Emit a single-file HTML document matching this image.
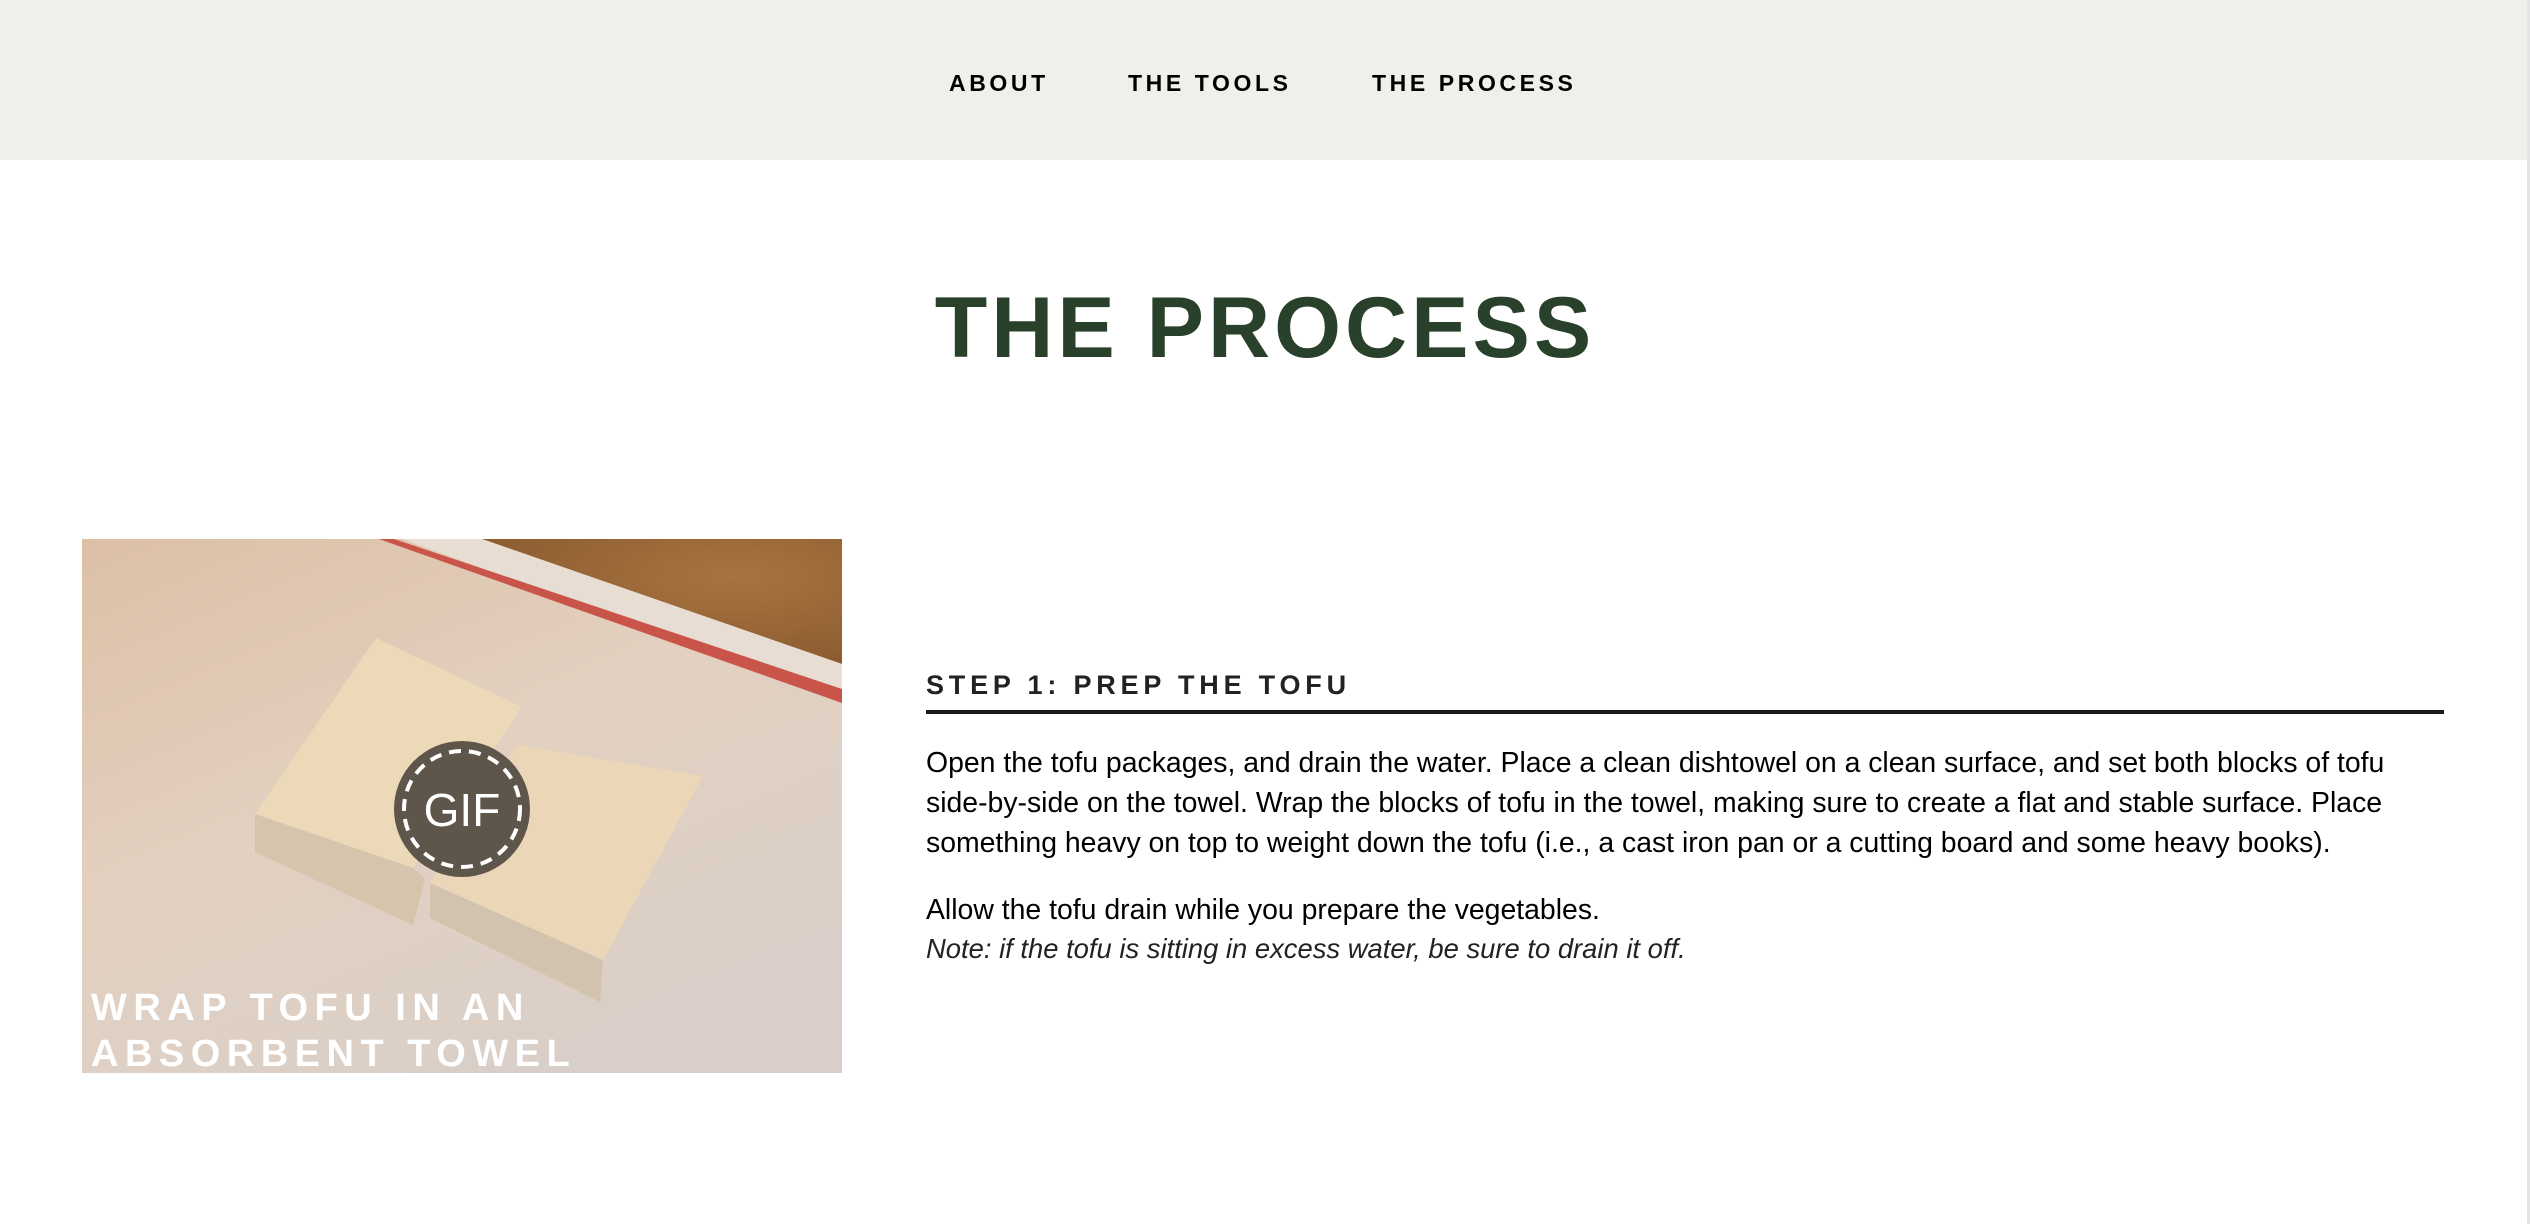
<!DOCTYPE html>
<html><head><meta charset="utf-8">
<style>
html,body{margin:0;padding:0;}
body{width:2530px;height:1224px;position:relative;background:#fff;font-family:"Liberation Sans",Arial,sans-serif;overflow:hidden;}
.hdr{position:absolute;left:0;top:0;width:2530px;height:160px;background:#f0efea;}
.nav{position:absolute;top:68px;font-size:23px;font-weight:bold;letter-spacing:3.6px;color:#000;white-space:nowrap;line-height:30px;}
.title{position:absolute;left:0;width:2530px;top:278px;text-align:center;font-size:86px;font-weight:bold;color:#29412b;letter-spacing:4px;line-height:100px;white-space:nowrap;}
.img{position:absolute;left:82px;top:539px;width:760px;height:534px;overflow:hidden;}
.step{position:absolute;left:926px;top:668px;font-size:27px;font-weight:bold;letter-spacing:4.8px;color:#222;line-height:34px;white-space:nowrap;}
.rule{position:absolute;left:926px;top:710px;width:1518px;height:4px;background:#1a1a1a;}
.p{position:absolute;left:926px;font-size:28.4px;color:#000;line-height:40px;white-space:nowrap;}
.sb{position:absolute;right:0;top:0;width:3px;height:1224px;background:#e4e4e4;}
</style></head><body>
<div class="hdr"></div>
<div class="nav" style="left:949px">ABOUT</div>
<div class="nav" style="left:1128px">THE TOOLS</div>
<div class="nav" style="left:1372px">THE PROCESS</div>
<div class="title">THE PROCESS</div>
<div class="img">
<svg width="760" height="534" viewBox="0 0 760 534" xmlns="http://www.w3.org/2000/svg">
<defs>
<linearGradient id="bg" x1="0" y1="0" x2="0.6" y2="1">
<stop offset="0" stop-color="#dcc0a6"/><stop offset="0.5" stop-color="#e3d0c0"/><stop offset="1" stop-color="#d9cfc8"/>
</linearGradient>
<radialGradient id="gr" cx="0.7" cy="0.3" r="0.8">
<stop offset="0" stop-color="#a8743f"/><stop offset="1" stop-color="#8a5a30"/>
</radialGradient>
</defs>
<rect width="760" height="534" fill="url(#bg)"/>
<polygon points="400,0 760,0 760,125" fill="url(#gr)"/>
<polygon points="320,0 400,0 760,125 760,160" fill="#e8ddd2"/>
<polygon points="297,0 312,0 760,150 760,164" fill="#c9544a"/>
<polygon points="173,275 294,99 440,168 331,329" fill="#ecd9b8"/>
<polygon points="173,275 173,313 331,386 343,340 331,329" fill="#d6c4ac"/>
<polygon points="348,344 435,206 621,237 521,421" fill="#ebd7b8"/>
<polygon points="348,344 348,379 518,463 521,421" fill="#d2c3ae"/>
<circle cx="380" cy="270" r="68" fill="#5f564b"/>
<circle cx="380" cy="270" r="58" fill="none" stroke="#fff" stroke-width="4" stroke-dasharray="12 8"/>
<text x="380" y="287" text-anchor="middle" font-family="Liberation Sans, sans-serif" font-size="46" fill="#fff">GIF</text>
<text x="9" y="481" font-family="Liberation Sans, sans-serif" font-weight="bold" font-size="38" fill="#fff" letter-spacing="6.5">WRAP TOFU IN AN</text>
<text x="9" y="527" font-family="Liberation Sans, sans-serif" font-weight="bold" font-size="38" fill="#fff" letter-spacing="6.5">ABSORBENT TOWEL</text>
</svg>
</div>
<div class="step">STEP 1: PREP THE TOFU</div>
<div class="rule"></div>
<div class="p" style="top:743px">Open the tofu packages, and drain the water. Place a clean dishtowel on a clean surface, and set both blocks of tofu</div>
<div class="p" style="top:783px">side-by-side on the towel. Wrap the blocks of tofu in the towel, making sure to create a flat and stable surface. Place</div>
<div class="p" style="top:823px">something heavy on top to weight down the tofu (i.e., a cast iron pan or a cutting board and some heavy books).</div>
<div class="p" style="top:890px">Allow the tofu drain while you prepare the vegetables.</div>
<div class="p" style="top:929px;font-style:italic;color:#222;font-size:27.4px">Note: if the tofu is sitting in excess water, be sure to drain it off.</div>
<div class="sb"></div>
</body></html>
